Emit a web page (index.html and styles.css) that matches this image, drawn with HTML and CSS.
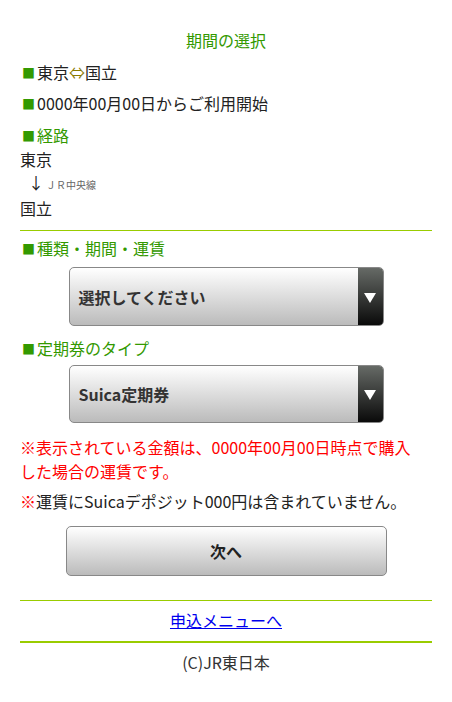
FILE: index.html
```html
<!DOCTYPE html>
<html lang="ja">
<head>
  <meta charset="UTF-8">
  <title>期間の選択</title>
  <link rel="stylesheet" href="styles.css">
</head>
<body>
  <div class="page">
    <h1 class="title">期間の選択</h1>

    <p class="item"><span class="mark">■</span>東京<span class="both">⇔</span>国立</p>
    <p class="item"><span class="mark">■</span>0000年00月00日からご利用開始</p>

    <p class="head"><span class="mark">■</span>経路</p>
    <div class="route">
      <div class="station">東京</div>
      <div class="line"><span class="arrow">↓</span>ＪＲ中央線</div>
      <div class="station">国立</div>
    </div>

    <hr class="rule">

    <p class="head head-1"><span class="mark">■</span>種類・期間・運賃</p>
    <div class="select">
      <span class="select-text">選択してください</span>
      <span class="select-btn"><span class="tri"></span></span>
    </div>

    <p class="head head-2"><span class="mark">■</span>定期券のタイプ</p>
    <div class="select">
      <span class="select-text">Suica定期券</span>
      <span class="select-btn"><span class="tri"></span></span>
    </div>

    <p class="note note-red red">※表示されている金額は、0000年00月00日時点で購入した場合の運賃です。</p>
    <p class="note"><span class="red">※</span>運賃にSuicaデポジット000円は含まれていません。</p>

    <button class="next">次へ</button>

    <hr class="rule rule-top">
    <p class="menu"><a href="#">申込メニューへ</a></p>
    <hr class="rule rule-thick">
    <p class="copy">(C)JR東日本</p>
  </div>
</body>
</html>
```

FILE: styles.css
```css
body {
  margin: 0;
  font-family: "Noto Sans CJK JP", "Noto Sans", sans-serif;
  font-size: 16px;
  line-height: 24px;
  color: #222;
  background: #fff;
}

.page {
  padding: 28px 20px 20px;
}

.title {
  margin: 0;
  font-size: 16px;
  line-height: 24px;
  font-weight: normal;
  color: #339900;
  text-align: center;
}

p {
  margin: 0;
}

.mark {
  color: #339900;
  font-size: 13px;
  line-height: 0;
  margin: 0 2px;
  vertical-align: 1px;
}

.item {
  margin-top: 7px;
}

.title + .item {
  margin-top: 8px;
}

.both {
  color: #8a7a00;
}

.head {
  color: #339900;
  margin-top: 8px;
}

.route .line {
  height: 22px;
  padding: 3px 0 0 8px;
  font-size: 10px;
  line-height: 22px;
  color: #666;
}

.arrow {
  font-size: 16px;
  line-height: 0;
  color: #222;
  margin-right: 2px;
}

.rule {
  height: 0;
  border: none;
  border-top: 1px solid #99cc00;
  margin: 10px 0 7px;
}

.head-1 {
  margin-top: 0;
}

.rule + .head-1 {
  margin-top: -2px;
}

.select {
  display: flex;
  align-items: center;
  width: 315px;
  height: 59px;
  box-sizing: border-box;
  margin: 7px auto 0;
  border: 1px solid #888;
  border-radius: 5px;
  background: linear-gradient(#fff, #bbb);
  overflow: hidden;
}

.select-text {
  flex: 1;
  padding-left: 9px;
  font-weight: bold;
  color: #333;
}

.select-btn {
  width: 25px;
  height: 100%;
  display: flex;
  align-items: center;
  justify-content: center;
  background: linear-gradient(#666a66, #0a0a0a);
}

.tri {
  width: 0;
  height: 0;
  border-left: 6px solid transparent;
  border-right: 6px solid transparent;
  border-top: 10px solid #fff;
  margin-top: 2px;
}

.head-2 {
  margin-top: 10px;
}

.head-2 + .select {
  height: 58px;
  margin-top: 5px;
}

.note {
  margin-top: 12px;
}

.note-red {
  padding-right: 14px;
}

.note + .note {
  margin-top: 6px;
}

.red {
  color: #ff0000;
}

.next {
  display: block;
  width: 321px;
  height: 50px;
  margin: 13px auto 0;
  border: 1px solid #888;
  border-radius: 5px;
  background: linear-gradient(#fff, #bbb);
  font-family: inherit;
  font-size: 16px;
  font-weight: bold;
  color: #222;
}

.rule-top {
  margin: 24px 0 7px;
}

.menu {
  text-align: center;
}

.menu a {
  color: #0000ee;
}

.rule-thick {
  border-top-width: 2px;
  margin: 9px 0 7px;
}

.copy {
  text-align: center;
  color: #333;
}
```
